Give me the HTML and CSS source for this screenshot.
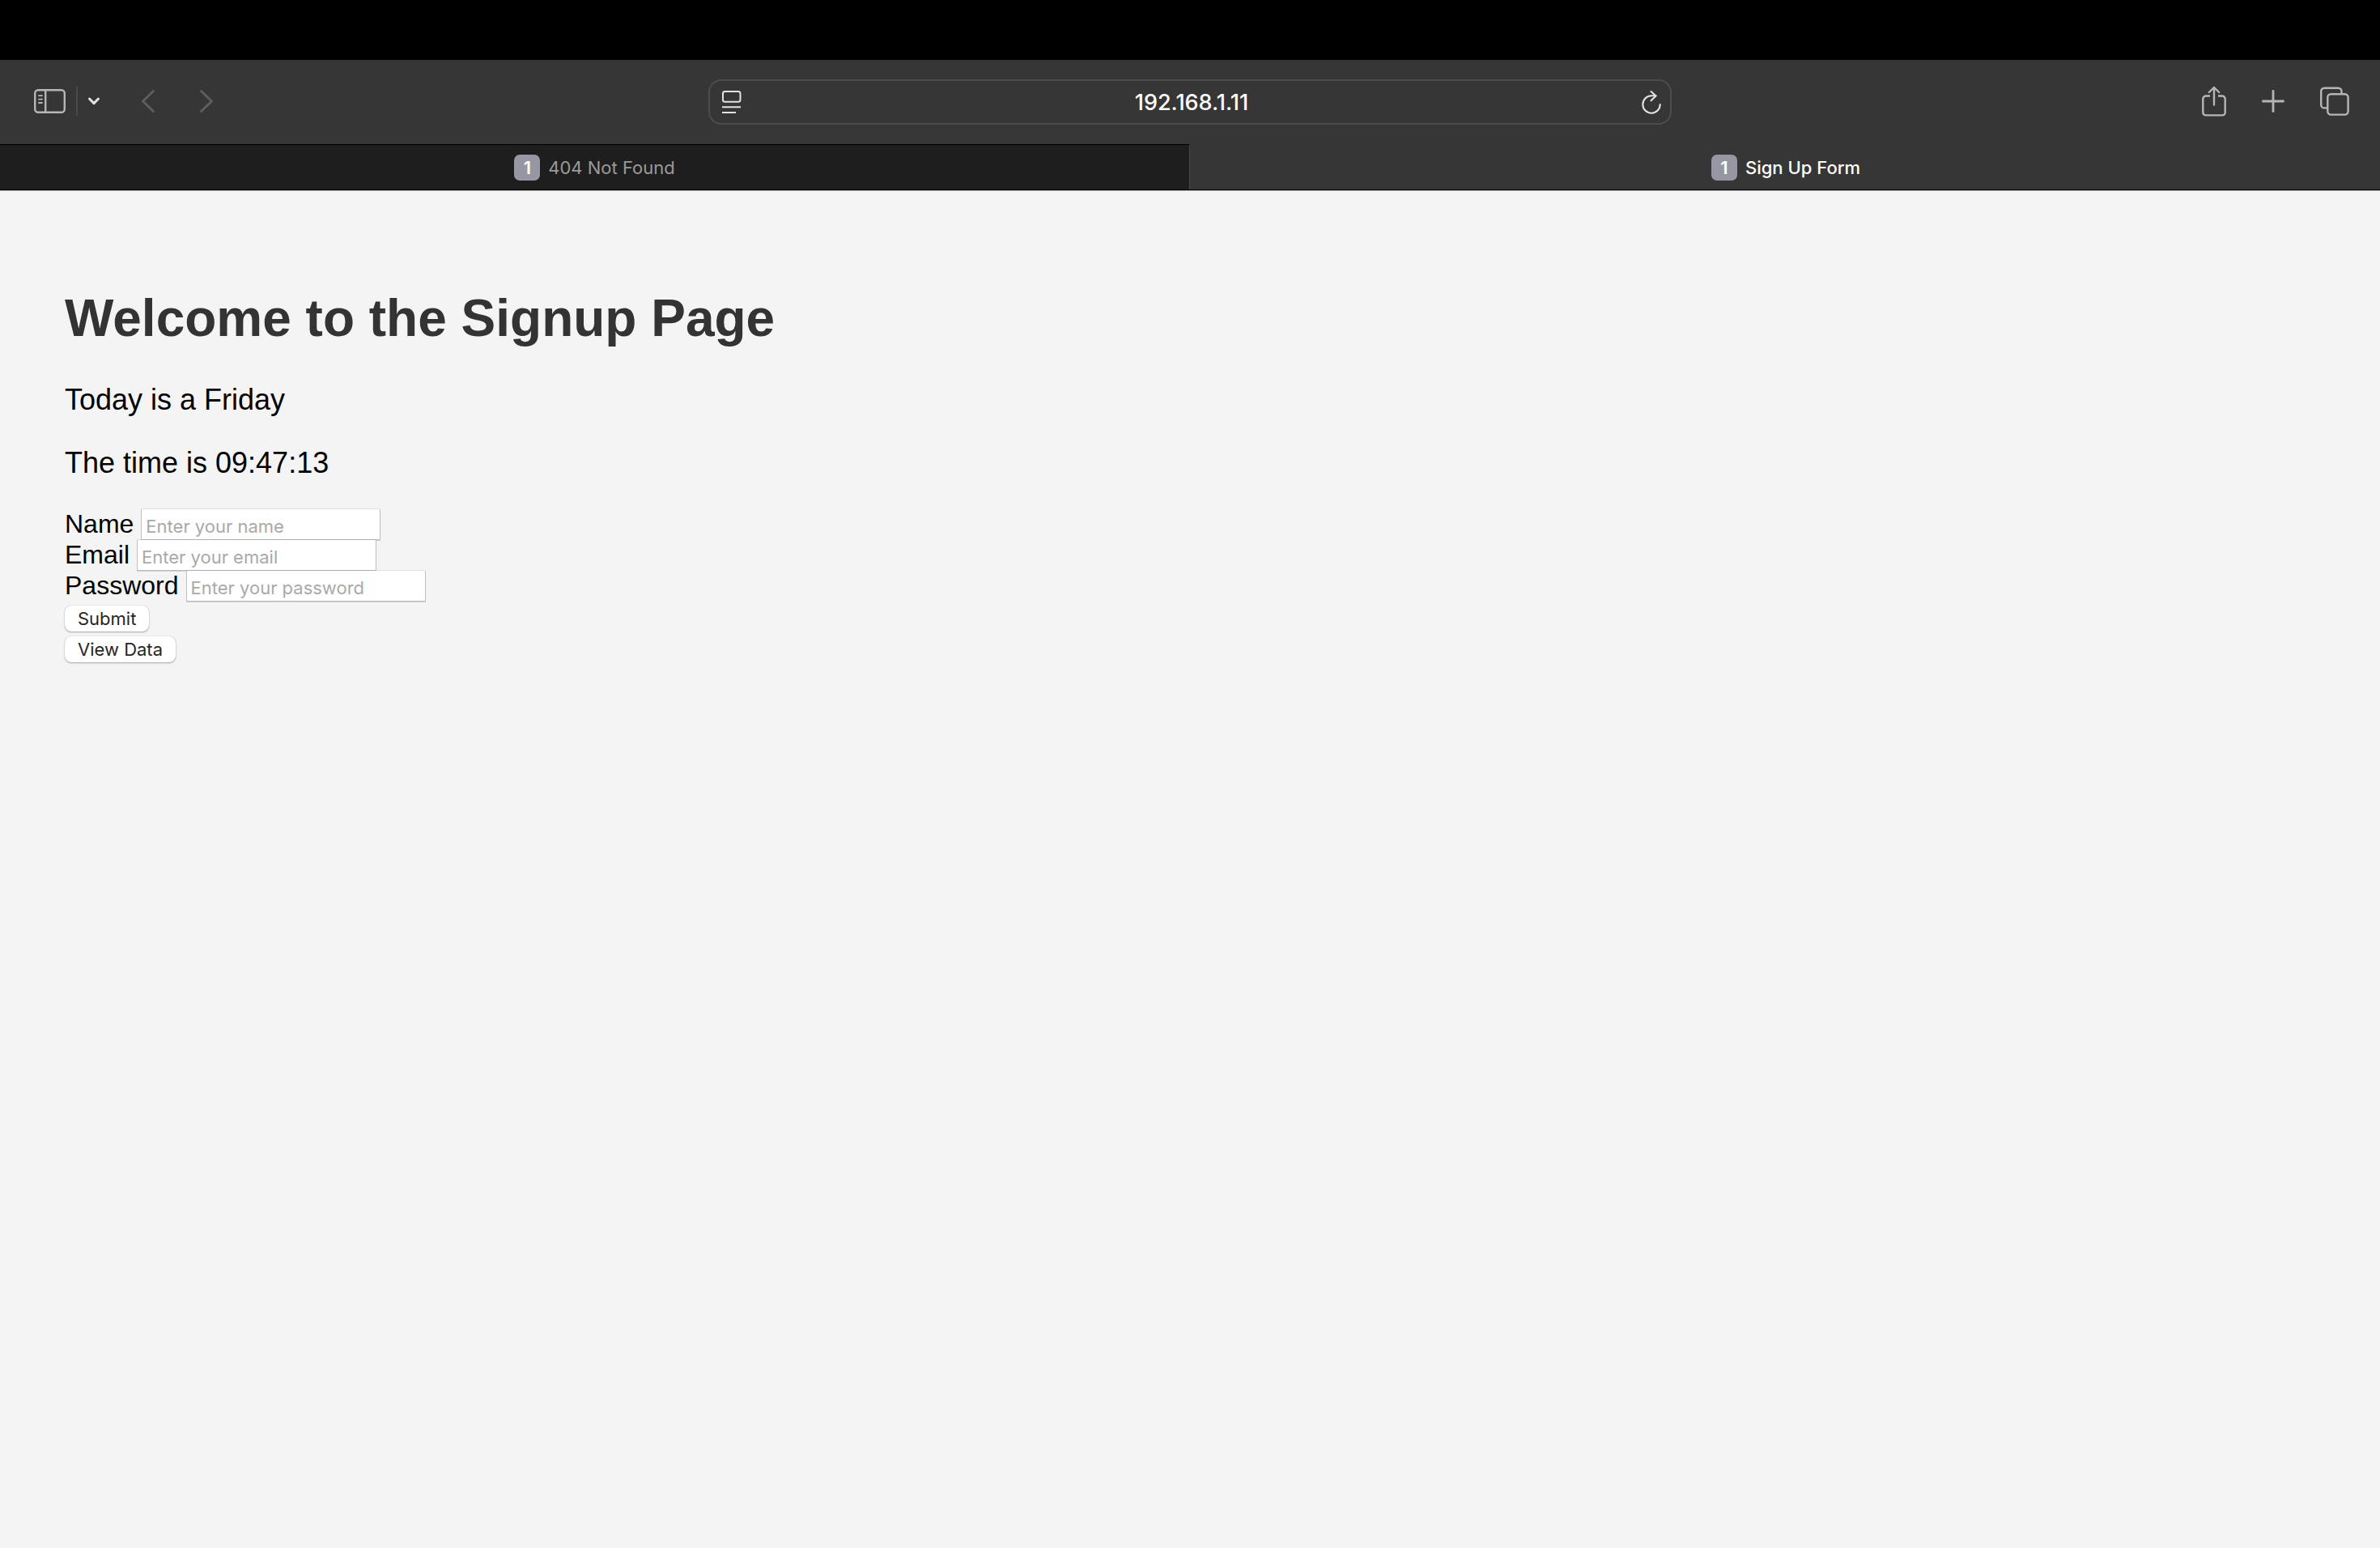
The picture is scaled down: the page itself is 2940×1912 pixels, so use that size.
FILE: index.html
```html
<!DOCTYPE html>
<html lang="en">
<head>
<meta charset="utf-8">
<title>Sign Up Form</title>
<link rel="stylesheet" href="styles.css">
</head>
<body>
<header class="browser">
  <div class="toolbar">
    <div class="tools">
      <button class="icon-button" type="button" aria-label="Show sidebar">
        <svg width="40" height="32" viewBox="0 0 40 32" fill="none" stroke="#b6b6b6" stroke-width="2.4"><rect x="1.2" y="2.2" width="36.600" height="27.6" rx="4"/><path d="M14.200 2v28"/><path d="M6 9.2h4M6 13.6h4M6 18h4" stroke-width="1.8" stroke-linecap="round"/></svg>
      </button>
      <span class="divider"></span>
      <button class="icon-button" type="button" aria-label="Tab groups">
        <svg width="16" height="12" viewBox="0 0 16 12" fill="none" stroke="#e2e2e2" stroke-width="3" stroke-linecap="round" stroke-linejoin="round"><path d="M2.5 3l5.5 5.6L13.500 3"/></svg>
      </button>
      <button class="icon-button back" type="button" aria-label="Back">
        <svg width="18" height="30" viewBox="0 0 18 30" fill="none" stroke="#5f5f5f" stroke-width="2.8" stroke-linecap="round" stroke-linejoin="round"><path d="M15.500 2.500L2.500 15l13 12.500"/></svg>
      </button>
      <button class="icon-button forward" type="button" aria-label="Forward">
        <svg width="18" height="30" viewBox="0 0 18 30" fill="none" stroke="#5f5f5f" stroke-width="2.8" stroke-linecap="round" stroke-linejoin="round"><path d="M2.500 2.500l13 12.500-13 12.500"/></svg>
      </button>
    </div>
    <div class="address">
      <button class="icon-button" type="button" aria-label="Page menu">
        <svg width="24" height="28" viewBox="0 0 24 28" fill="none" stroke="#e2e2e2" stroke-width="2"><rect x="1" y="1" width="21.500" height="12.800" rx="2.500"/><path d="M0 20.300h23M0 27h17"/></svg>
      </button>
      <input class="address-input" type="text" aria-label="Address" value="192.168.1.11">
      <button class="icon-button" type="button" aria-label="Reload">
        <svg width="24" height="30" viewBox="0 0 24 30" fill="none" stroke="#e2e2e2" stroke-width="2.100" stroke-linecap="round" stroke-linejoin="round"><path d="M22.700 18a10.700 10.700 0 1 1-10.700-10.700h5.500"/><path d="M11.500 2l6 5.500-6 5.800"/></svg>
      </button>
    </div>
    <div class="tools tools-end">
      <button class="icon-button" type="button" aria-label="Share">
        <svg width="30" height="38" viewBox="0 0 30 38" fill="none" stroke="#b6b6b6" stroke-width="2.400" stroke-linecap="round" stroke-linejoin="round"><path d="M10 12.500H5a3.700 3.700 0 0 0-3.700 3.700v16.500A3.700 3.700 0 0 0 5 36.400h20a3.700 3.700 0 0 0 3.700-3.700V16.200A3.700 3.700 0 0 0 25 12.500h-5" stroke-linecap="butt"/><path d="M15 23.500V2M8.800 8L15 2l6.200 6"/></svg>
      </button>
      <button class="icon-button" type="button" aria-label="New tab">
        <svg width="28" height="28" viewBox="0 0 28 28" fill="none" stroke="#b6b6b6" stroke-width="2.800" stroke-linecap="round"><path d="M14 1.500v25M1.500 14h25"/></svg>
      </button>
      <button class="icon-button" type="button" aria-label="Tab overview">
        <svg width="36" height="36" viewBox="0 0 36 36" fill="none" stroke="#b6b6b6" stroke-width="2.400"><path d="M9 26.400H5.200a4 4 0 0 1-4-4V5.700a4 4 0 0 1 4-4h17.300a4 4 0 0 1 4 4V9"/><rect x="9.300" y="9.300" width="25.300" height="25.300" rx="4"/></svg>
      </button>
    </div>
  </div>
  <nav class="tabs">
    <a class="tab" href="#"><span class="badge">1</span>404 Not Found</a>
    <a class="tab tab-active" href="#" aria-current="page"><span class="badge">1</span>Sign Up Form</a>
  </nav>
</header>
<main class="page">
  <h1 class="title">Welcome to the Signup Page</h1>
  <p class="info">Today is a Friday</p>
  <p class="info">The time is 09:47:13</p>
  <form class="form">
    <div class="field">
      <label for="name">Name</label>
      <input class="field-input" id="name" type="text" placeholder="Enter your name">
    </div>
    <div class="field">
      <label for="email">Email</label>
      <input class="field-input" id="email" type="email" placeholder="Enter your email">
    </div>
    <div class="field">
      <label for="password">Password</label>
      <input class="field-input" id="password" type="password" placeholder="Enter your password">
    </div>
    <div class="actions">
      <button class="action" type="submit">Submit</button>
      <button class="action" type="button">View Data</button>
    </div>
  </form>
</main>
</body>
</html>
```
FILE: styles.css
```css
* {
  box-sizing: border-box;
}

body {
  margin: 0;
  background: #f4f4f4;
  color: #000;
  font-family: "Liberation Sans", Arial, sans-serif;
}

.browser {
  border-top: 74px solid #000;
  border-bottom: 1px solid #b4b4b4;
  background: #363636;
  font-family: Inter, sans-serif;
}

.toolbar {
  display: grid;
  grid-template-columns: 1fr minmax(0, 1190px) 1fr;
  align-items: center;
  height: 104px;
}

.tools {
  display: flex;
  align-items: center;
  padding: 0 0 2px 42px;
}

.tools-end {
  justify-content: flex-end;
  gap: 44px;
  padding: 0 38px 2px 0;
}

.icon-button {
  display: flex;
  padding: 0;
  border: 0;
  background: none;
}

.divider {
  width: 2px;
  height: 36px;
  margin: 0 12px;
  background: #4a4a4a;
}

.back {
  margin-left: 50px;
}

.forward {
  margin-left: 54px;
}

.address {
  display: flex;
  align-items: center;
  height: 56px;
  padding: 0 11px 0 15px;
  border: 2px solid #4d4d4d;
  border-radius: 16px;
}

.address-input {
  flex: 1;
  min-width: 0;
  padding: 2px 0 0;
  border: 0;
  background: none;
  color: #fff;
  font: 500 27px/32px Inter, sans-serif;
  text-align: center;
}

.tabs {
  display: grid;
  grid-template-columns: 1fr 1fr;
  border-bottom: 1px solid #000;
}

.tab {
  display: flex;
  align-items: center;
  justify-content: center;
  gap: 10px;
  height: 56px;
  border-top: 1px solid #000;
  border-right: 1px solid #4a4a4a;
  background: #1e1e1e;
  color: #9a9a9a;
  font-size: 22px;
  line-height: 28px;
  text-decoration: none;
}

.tab-active {
  padding-left: 2px;
  border-color: #363636;
  border-right: 0;
  background: #363636;
  color: #fff;
  font-weight: 500;
}

.badge {
  width: 32px;
  height: 32px;
  border-radius: 7px;
  background: #9796a3;
  color: #fff;
  font-weight: 600;
  line-height: 32px;
  text-align: center;
}

.page {
  padding: 120px 80px;
}

.title {
  margin: 0 0 42px;
  color: #333;
  font-size: 64px;
  line-height: 74px;
}

.info {
  margin: 0 0 34px;
  font-size: 36px;
  line-height: 44px;
}

.field {
  display: flex;
  gap: 9px;
  height: 38px;
  font-size: 32px;
  line-height: 38px;
}

/* Neighbouring fields overlap by a pixel, so the top edge stays translucent. */
.field-input {
  width: 296px;
  height: 39px;
  padding: 4px 5px 0;
  border: 1px solid rgba(0, 0, 0, 0.07);
  border-bottom-color: #bcbcbc;
  border-radius: 0;
  background: #fff;
  background-clip: padding-box;
  box-shadow: 0 1px 0 #d0d0d0;
  font: 22px/28px Inter, sans-serif;
}

.field-input::placeholder {
  color: #a9a9a9;
}

.actions {
  display: flex;
  flex-direction: column;
  align-items: flex-start;
  gap: 6px;
  margin-top: 6px;
}

.action {
  height: 32px;
  padding: 0 16px;
  border: 0;
  border-radius: 8px;
  background: #fff;
  box-shadow: 0 0 1px rgba(0, 0, 0, 0.3), 0 1px 2px rgba(0, 0, 0, 0.3);
  color: #262626;
  font: 22px/32px Inter, sans-serif;
}
```
